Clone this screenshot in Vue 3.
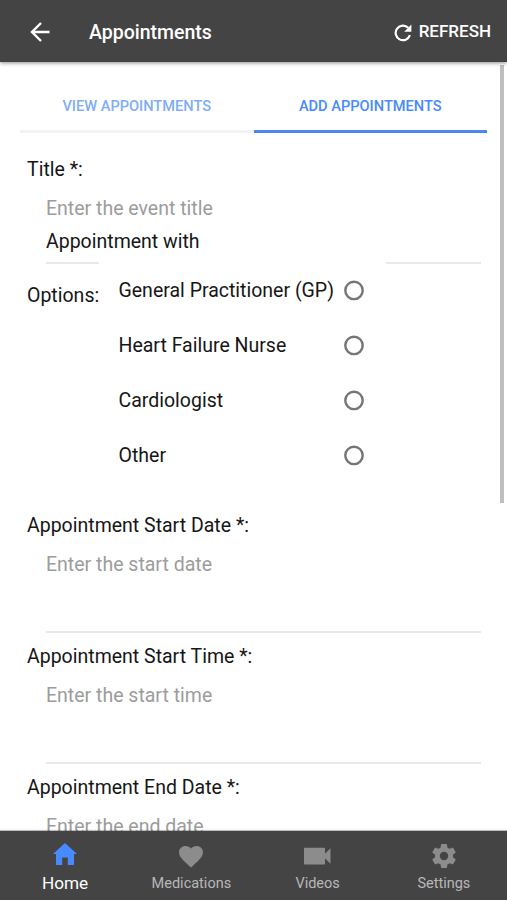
<script setup>
import { ref } from 'vue'

const options = ['General Practitioner (GP)', 'Heart Failure Nurse', 'Cardiologist', 'Other']
const selected = ref('')
const fields = [
  { label: 'Appointment Start Date *:', hint: 'Enter the start date' },
  { label: 'Appointment Start Time *:', hint: 'Enter the start time' },
  { label: 'Appointment End Date *:', hint: 'Enter the end date' },
]
</script>

<template>
  <div class="app">
    <header class="bar">
      <svg class="back" viewBox="0 0 20 20"><path d="M19.500 10H2M11 1L2 10l9 9" /></svg>
      <h1>Appointments</h1>
      <button class="refresh">
        <svg viewBox="0 0 18 18"><path class="arc" d="M14.200 3.800A7.300 7.300 0 1 0 15.900 11.200" /><path class="tip" d="M17.400 0.600V7.800H10.200Z" /></svg>
        <span>REFRESH</span>
      </button>
    </header>

    <main class="content">
      <nav class="tabs">
        <button class="tab">VIEW APPOINTMENTS</button>
        <button class="tab active">ADD APPOINTMENTS</button>
      </nav>

      <section class="title-group">
        <div class="label">Title *:</div>
        <div class="hint">Enter the event title</div>
        <div class="with">Appointment with</div>
        <div class="rules"><i class="rule-left"></i><i class="rule-right"></i></div>
      </section>

      <section class="options">
        <div class="options-label">Options:</div>
        <div class="choices">
          <div v-for="o in options" :key="o" class="choice" @click="selected = o">
            <span class="name">{{ o }}</span>
            <svg class="radio" viewBox="0 0 20 20">
              <circle cx="10" cy="10.400" r="8.700" />
              <circle v-if="selected === o" class="dot" cx="10" cy="10.400" r="4.500" />
            </svg>
          </div>
        </div>
      </section>

      <section v-for="f in fields" :key="f.label" class="field">
        <div class="label">{{ f.label }}</div>
        <div class="hint">{{ f.hint }}</div>
      </section>
      <div class="scrollbar"></div>
    </main>

    <footer class="nav">
      <div class="item current">
        <svg viewBox="0 0 24 24"><path d="M12 1L24 12h-3v11H14.800v-7.500H9.200V23H3V12H0Z" /></svg>
        <span>Home</span>
      </div>
      <div class="item">
        <svg viewBox="0 0 24 24"><path d="M12 23.500l-1.800-1.600C4 16.300 0 12.700 0 8.300 0 4.700 2.900 2 6.600 2 8.700 2 10.700 2.900 12 4.500 13.300 2.900 15.300 2 17.400 2 21.100 2 24 4.700 24 8.300c0 4.400-4 8-10.200 13.600Z" /></svg>
        <span>Medications</span>
      </div>
      <div class="item">
        <svg class="wide" viewBox="0 0 27 24"><path d="M.8 3.700h19.400q.8 0 .8.800v5.300l5.500-5.500v15.400L21 14.200v5.500q0 .8-.8.800H.8Q0 20.500 0 19.700V4.500Q0 3.700.8 3.700Z" /></svg>
        <span>Videos</span>
      </div>
      <div class="item">
        <svg viewBox="2 2 20 20"><path d="M19.430 12.980c.04-.32.07-.64.07-.98s-.03-.66-.07-.98l2.110-1.650c.19-.15.24-.42.12-.64l-2-3.460c-.12-.22-.39-.3-.61-.22l-2.490 1c-.52-.4-1.080-.73-1.690-.98l-.38-2.650C14.460 2.180 14.250 2 14 2h-4c-.25 0-.46.18-.49.42l-.38 2.650c-.61.25-1.170.59-1.690.98l-2.490-1c-.23-.09-.49 0-.61.22l-2 3.460c-.13.22-.07.49.12.64l2.110 1.650c-.04.32-.07.65-.07.98s.03.66.07.98l-2.110 1.650c-.19.15-.24.42-.12.64l2 3.460c.12.22.39.3.61.22l2.490-1c.52.4 1.080.73 1.690.98l.38 2.650c.03.24.24.42.49.42h4c.25 0 .46-.18.49-.42l.38-2.650c.61-.25 1.170-.59 1.690-.98l2.490 1c.23.09.49 0 .61-.22l2-3.460c.12-.22.07-.49-.12-.64l-2.110-1.650ZM12 15.500a3.500 3.500 0 1 1 0-7 3.500 3.500 0 0 1 0 7Z" /></svg>
        <span>Settings</span>
      </div>
    </footer>
  </div>
</template>

<style>
body { margin: 0; }
</style>

<style scoped>
.app {
  width: 507px;
  height: 900px;
  display: flex;
  flex-direction: column;
  overflow: hidden;
  background: #fff;
  color: #161616;
  font: 400 19.5px/24px Roboto, sans-serif;
}
button { border: 0; background: none; padding: 0; font: inherit; }
.bar {
  position: relative;
  z-index: 1;
  height: 62px;
  flex: none;
  display: flex;
  align-items: center;
  padding: 0 16px 0 30px;
  box-sizing: border-box;
  background: #444;
  color: #fff;
  box-shadow: 0 1px 4px rgba(0, 0, 0, 0.45);
}
.back { width: 20px; height: 20px; margin-top: 1px; fill: none; stroke: #fff; stroke-width: 2.4; }
h1 { margin: 3px 0 0 39px; font-size: 19.5px; font-weight: 500; line-height: 24px; }
.refresh { margin-left: auto; display: flex; align-items: center; gap: 7px; color: #fff; font-size: 17px; font-weight: 500; }
.refresh svg { width: 18px; height: 18px; margin-top: 3px; }
.refresh span { margin-top: -1px; }
.arc { fill: none; stroke: #fff; stroke-width: 2.2; }
.tip { fill: #fff; }
.content { position: relative; flex: 1; min-height: 0; overflow: hidden; }
.tabs { display: flex; margin: 18px 20px 0; }
.tab {
  flex: 1;
  height: 53px;
  box-sizing: border-box;
  border-bottom: 3px solid #f0f2f5;
  padding-top: 2px;
  color: #80adf8;
  font-size: 14.6px;
  font-weight: 500;
}
.tab.active { color: #488aff; border-color: #4a87f0; }
.title-group { padding-top: 25px; }
.label { padding-left: 27px; }
.hint { margin: 15px 0 0 46px; color: #9c9c9c; }
.with { margin: 9px 0 0 46px; }
.rules { display: flex; justify-content: space-between; margin: 8px 26px 0 46px; }
.rules i { height: 2px; background: #e9e9e9; }
.rule-left { width: 53px; }
.rule-right { width: 95px; }
.options { display: flex; height: 250px; }
.options-label { width: 92px; padding: 20px 0 0 27px; box-sizing: border-box; flex: none; }
.choices { margin: -1px 0 0 26.5px; width: 245px; }
.choice { display: flex; align-items: center; justify-content: space-between; height: 55px; }
.name { white-space: nowrap; }
.radio { width: 20px; height: 20px; margin-top: -1px; overflow: visible; fill: none; stroke: #757575; stroke-width: 2.4; }
.radio .dot { fill: #488aff; stroke: none; }
.field { height: 131px; }
.field::after { content: ''; display: block; height: 2px; margin: 54px 26px 0 46px; background: #e9e9e9; }
.scrollbar { position: absolute; top: 3px; right: 3px; width: 4px; height: 438px; background: #bfbfbf; }
.nav { position: relative; height: 69px; flex: none; display: flex; background: #444; box-shadow: 0 -1px 1px rgba(0, 0, 0, 0.25); }
.item { flex: 1; display: flex; flex-direction: column; align-items: center; color: #b8b8b8; font-size: 14.5px; line-height: 20px; }
.item svg { width: 24px; height: 24px; margin: 13px 0 6px; fill: #8c8c8c; }
.item .wide { width: 27px; }
.item.current { color: #fff; font-size: 17.2px; padding-left: 2px; }
.item.current svg { margin: 11px 0 7px; fill: #488aff; }
</style>
